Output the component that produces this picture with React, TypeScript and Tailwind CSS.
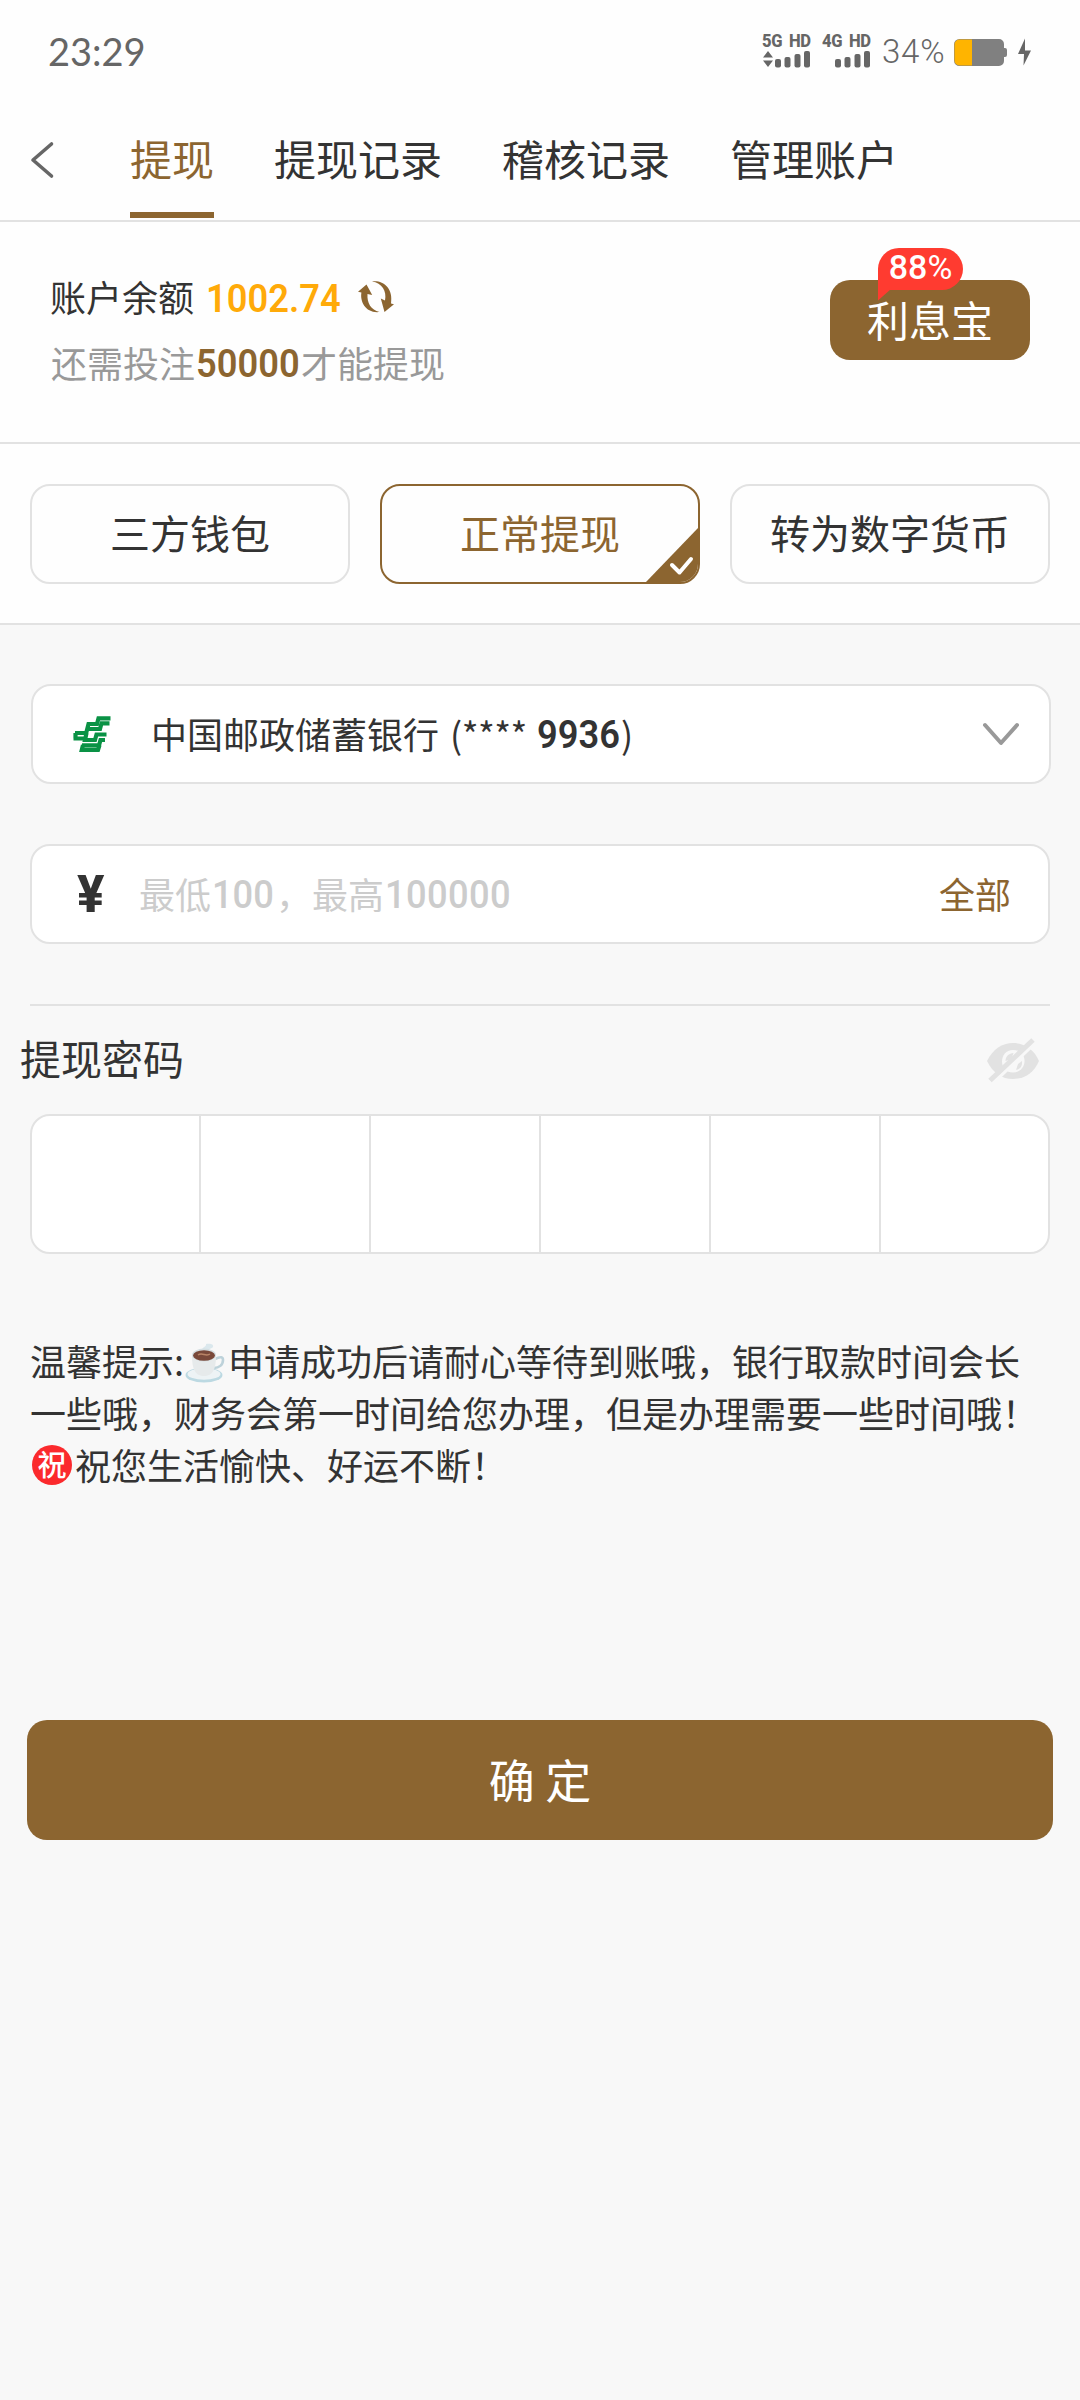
import React from 'react';
import clsx from 'clsx';

const tabs = ['提现', '提现记录', '稽核记录', '管理账户'];
const methods = ['三方钱包', '正常提现', '转为数字货币'];

// Narrow figures, set beside the Chinese text
function Digits({ children, className }: { children: string; className?: string }) {
  return (
    <span className={clsx("mt-[4px] font-['Roboto'] text-[39px] whitespace-nowrap", className)}>
      <span className="inline-block origin-left scale-x-[0.93]">{children}</span>
    </span>
  );
}

function Signal({ label, arrows }: { label: string; arrows?: boolean }) {
  return (
    <div className="w-[50px] mr-[10px]">
      <div className="h-[15px] origin-left scale-x-[0.92] font-['Roboto'] font-extrabold text-[18px] leading-[15px] tracking-[-0.3px] [word-spacing:3px] whitespace-nowrap">
        {label}
      </div>
      <svg className="block mt-[3px]" width="50" height="17" viewBox="0 0 50 17" fill="#666">
        {arrows && <path d="M6 0l5 6.500H1zM6 16l-5-6.500h10z" />}
        <rect x="13" y="8" width="6" height="8.500" rx="2" />
        <rect x="22.500" y="6" width="6" height="10.500" rx="2" />
        <rect x="32.500" y="3" width="6" height="13.500" rx="2" />
        <rect x="42" y="0" width="6" height="16.500" rx="2" />
      </svg>
    </div>
  );
}

function StatusBar() {
  return (
    <div className="h-[100px] flex justify-between pl-[48px] pr-[49px] text-[#666]">
      <div className="pt-[27px] font-['Lato'] text-[38px] leading-[48px]">23:29</div>
      <div className="flex pt-[33px]">
        <Signal label="5G HD" arrows />
        <Signal label="4G HD" />
        <div className="w-[71px] -mt-[2px] font-['Roboto'] font-light text-[33px] leading-[42px] tracking-[0.8px]">34%</div>
        <svg className="block mt-[5px]" width="78" height="30" viewBox="0 0 78 30">
          <path d="M6.500 1H46a5 5 0 0 1 5 5v4h1a2 2 0 0 1 2 2v5a2 2 0 0 1-2 2h-1v4a5 5 0 0 1-5 5H6.500a5.500 5.500 0 0 1-5.500-5.500v-16A5.500 5.500 0 0 1 6.500 1z" fill="#808080" />
          <path d="M6.500 1.500H19v26H6.500a5 5 0 0 1-5-5v-16a5 5 0 0 1 5-5z" fill="#ffb400" />
          <path d="M72 0.500L65 16h6l-0.500 11.500L78 12.500h-6z" fill="#666" />
        </svg>
      </div>
    </div>
  );
}

function NavBar() {
  return (
    <div className="h-[122px] flex border-b-2 border-[#e2e2e2]">
      <svg className="block mt-[40px] ml-[29px]" width="26" height="40" viewBox="0 0 26 40" fill="none" stroke="#666" strokeWidth="3.6" strokeLinecap="round" strokeLinejoin="round">
        <path d="M22.500 4L4 20l18.500 16" />
      </svg>
      <div className="ml-[75px] flex gap-[60px]">
        {tabs.map((tab, i) => (
          <div
            key={tab}
            className={clsx(
              'h-[118px] pt-[28px] text-[42px] leading-[60px]',
              i === 0 ? 'text-[#8c6530] border-b-[6px] border-[#8c6530]' : 'text-[#333]',
            )}
          >
            {tab}
          </div>
        ))}
      </div>
    </div>
  );
}

function Balance() {
  return (
    <div className="h-[222px] flex justify-between pl-[50px] pr-[50px] border-b-2 border-[#e2e2e2]">
      <div className="pt-[49px]">
        <div className="h-[52px] flex items-center text-[36px] leading-[52px] text-[#333]">
          <span className="-mt-[2px]">账户余额</span>
          <Digits className="ml-[12px] w-[138px] font-semibold text-[#ffaa09]">1002.74</Digits>
          <svg className="ml-[13px] shrink-0" width="38" height="34" viewBox="0 0 38 34" fill="#8c6530">
            <path d="M9.500 4.500L1 11.800l3.400.7C2.800 22 9 33.500 22.500 32 14 30 9.800 23 10.500 14l4.700 1z" />
            <path d="M15 1.500C26 0 36.500 8 34 23.500l3 .8L27.500 32l-3.700-13.500 4.200 2C30 11 25 3 15 1.500z" />
          </svg>
        </div>
        <div className="mt-[13px] h-[52px] flex items-center text-[36px] leading-[52px] text-[#999]">
          <span className="ml-[1px]">还需投注</span>
          <Digits className="ml-[1px] w-[105px] font-semibold text-[#8c6530]">50000</Digits>
          <span>才能提现</span>
        </div>
      </div>
      <div className="relative mt-[58px] w-[200px] h-[80px] rounded-[20px] bg-[#8c6530] text-[42px] leading-[77px] text-center text-white">
        利息宝
        <div className="absolute left-[48px] -top-[32px] w-[85px] h-[42px] rounded-[21px] rounded-bl-none bg-[#ff3b30] font-['Roboto'] text-[34px] leading-[39px] text-center">
          <span className="font-medium">88</span>%
          <svg className="absolute left-0 top-[41px]" width="14" height="12" viewBox="0 0 14 12" fill="#ff3b30">
            <path d="M0 0h13L0 11.500z" />
          </svg>
        </div>
      </div>
    </div>
  );
}

function Methods() {
  return (
    <div className="h-[181px] flex gap-[30px] px-[30px] pt-[40px] border-b-2 border-[#e2e2e2]">
      {methods.map((name, i) => (
        <div
          key={name}
          className={clsx(
            'relative w-[320px] h-[100px] border-2 rounded-[20px] overflow-hidden text-[40px] leading-[93px] text-center',
            i === 1 ? 'border-[#8c6530] text-[#8c6530]' : 'border-[#e2e2e2] text-[#333]',
          )}
        >
          {name}
          {i === 1 && (
            <svg className="absolute right-0 bottom-0" width="52" height="54" viewBox="0 0 52 54" fill="none">
              <path d="M52 0v54H0z" fill="#8c6530" />
              <path d="M26 37l7.500 7.500L45 31" stroke="#fff" strokeWidth="4" strokeLinecap="round" strokeLinejoin="round" />
            </svg>
          )}
        </div>
      ))}
    </div>
  );
}

function PostalLogo() {
  return (
    <svg width="38" height="36" viewBox="0 0 38 36" fill="none" stroke="#0a9245" strokeWidth="4.2">
      <path d="M37.500 2.300H25.500L24 8H15.500l-2.300 9H2" />
      <path d="M36.500 7.300h-8L27 13H13" />
      <path d="M0.500 22.500h14M2.500 17v5.500M13.500 17L12 24h8" />
      <path d="M33.500 18.500H23.500L22 24h-4M32 24h-4.500L26 29.300H9" />
      <path d="M10 29l-1.200 4.800H25L26.500 29" />
    </svg>
  );
}

function BankSelect() {
  return (
    <div className="ml-px mr-[-1px] h-[100px] flex items-center pb-[3px] border-2 border-[#e2e2e2] rounded-[20px] bg-white text-[36px] leading-[52px] text-[#333]">
      <div className="ml-[40px] mt-[3px] w-[79px] flex">
        <PostalLogo />
      </div>
      <span className="w-[299px] -ml-[1px]">中国邮政储蓄银行</span>
      <span className="w-[87px] tracking-[-0.500px]">(****</span>
      <Digits className="w-[84px] font-semibold">9936</Digits>
      <span>)</span>
      <svg className="ml-auto mr-[28px] mt-[2px]" width="40" height="26" viewBox="0 0 40 26" fill="none" stroke="#999" strokeWidth="4" strokeLinecap="round" strokeLinejoin="round">
        <path d="M4 4l16 18L36 4" />
      </svg>
    </div>
  );
}

function AmountInput() {
  return (
    <div className="mt-[60px] h-[100px] flex items-center pb-[3px] border-2 border-[#e2e2e2] rounded-[20px] bg-white text-[36px] leading-[52px] text-[#ccc]">
      <span className="ml-[45px] mt-[5px] w-[62px] font-['Roboto'] font-extrabold text-[51px] text-[#333]">¥</span>
      <span>最低</span>
      <Digits className="ml-[1px] w-[64px] font-medium">100</Digits>
      <span>，最高</span>
      <Digits className="ml-[1px] font-medium tracking-[0.4px]">100000</Digits>
      <span className="ml-auto mr-[37px] text-[#8c6530]">全部</span>
    </div>
  );
}

function Password() {
  return (
    <div className="mt-[60px] border-t-2 border-[#e2e2e2]">
      <div className="h-[108px] -ml-[10px] flex justify-between items-center text-[41px] leading-[60px] text-[#333]">
        <span className="-mt-[6px]">提现密码</span>
        <svg className="mr-[9px]" width="56" height="46" viewBox="0 0 56 46">
          <path d="M2 24C8 12 17 6 28 6s21 6 26 18C49 36 39 42 28 42S8 36 2 24z" fill="#e2e2e2" />
          <path d="M28 13c7 0 11.500 5 11.500 11S35 35.500 28 35.500 17 30.500 17 24.500 21 13 28 13z" fill="#f8f8f8" />
          <path d="M20.500 24c0-5 3.500-7.500 8-8l-2 6z" fill="#e2e2e2" />
          <path d="M31 33c5-1 6.500-5 6-9l-4 3z" fill="#e2e2e2" />
          <path d="M7 47L51 5" stroke="#f8f8f8" strokeWidth="3.500" />
          <path d="M5 43.500L48 3" stroke="#e2e2e2" strokeWidth="5" />
        </svg>
      </div>
      <div className="h-[140px] grid grid-cols-[169px_repeat(4,170px)_1fr] border-2 border-[#e2e2e2] rounded-[20px] bg-white">
        {[0, 1, 2, 3, 4, 5].map((n) => (
          <div key={n} className={clsx(n < 5 && 'border-r-2 border-[#e2e2e2]')} />
        ))}
      </div>
    </div>
  );
}

function CoffeeIcon() {
  return (
    <svg className="inline-block ml-[1px] mr-[3px] -mt-[6px] align-middle" width="40" height="40" viewBox="0 0 40 40">
      <path d="M17 8c-1-4 5-4 4-7 4-1 8 0 7 3-1 2-5 1-4 4z" fill="#dbe8ed" />
      <ellipse cx="19" cy="32" rx="18.500" ry="7.500" fill="#bcd9e2" />
      <ellipse cx="19" cy="31" rx="16.500" ry="5.800" fill="#edf3f5" />
      <path d="M30 16c6-3 8-2 8 1 0 5-4 8-9 8" fill="none" stroke="#bdd2da" strokeWidth="2.600" />
      <path d="M7 12c0 12 2 21 12 21s12-9 12-21z" fill="#e6eaeb" />
      <ellipse cx="19" cy="12" rx="12" ry="6.500" fill="#d5dfe2" />
      <ellipse cx="19" cy="12.500" rx="11" ry="5.200" fill="#79493a" />
      <path d="M13 12c4-3 8 2 12-1" fill="none" stroke="#b98567" strokeWidth="1.500" />
    </svg>
  );
}

function Notice() {
  return (
    <div className="mt-[80px] h-[162px] text-[36px] leading-[52px] text-[#333] whitespace-nowrap">
      <div className="h-[52px]">温馨提示:<CoffeeIcon />申请成功后请耐心等待到账哦，银行取款时间会长</div>
      <div className="h-[52px]">一些哦，财务会第一时间给您办理，但是办理需要一些时间哦！</div>
      <div className="h-[52px] flex items-center">
        <span className="ml-[2px] mr-[3px] mt-[2px] w-[40px] h-[40px] rounded-full bg-[#fb2a2d] text-center text-[29px] leading-[37px] font-medium text-white">祝</span>
        祝您生活愉快、好运不断！
      </div>
    </div>
  );
}

export default function App() {
  return (
    <div className="w-[1080px] h-[2400px] overflow-hidden bg-[#f8f8f8] font-['Noto_Sans_CJK_SC',sans-serif]">
      <div className="bg-[#fefefe]">
        <StatusBar />
        <NavBar />
        <Balance />
        <Methods />
      </div>
      <div className="px-[30px] pt-[59px]">
        <BankSelect />
        <AmountInput />
        <Password />
        <Notice />
      </div>
      <button className="flex justify-center mx-[27px] mt-[224px] w-[1026px] h-[120px] rounded-[20px] bg-[#8c6530] text-[46px] leading-[116px] text-white">
        确 定
      </button>
    </div>
  );
}
